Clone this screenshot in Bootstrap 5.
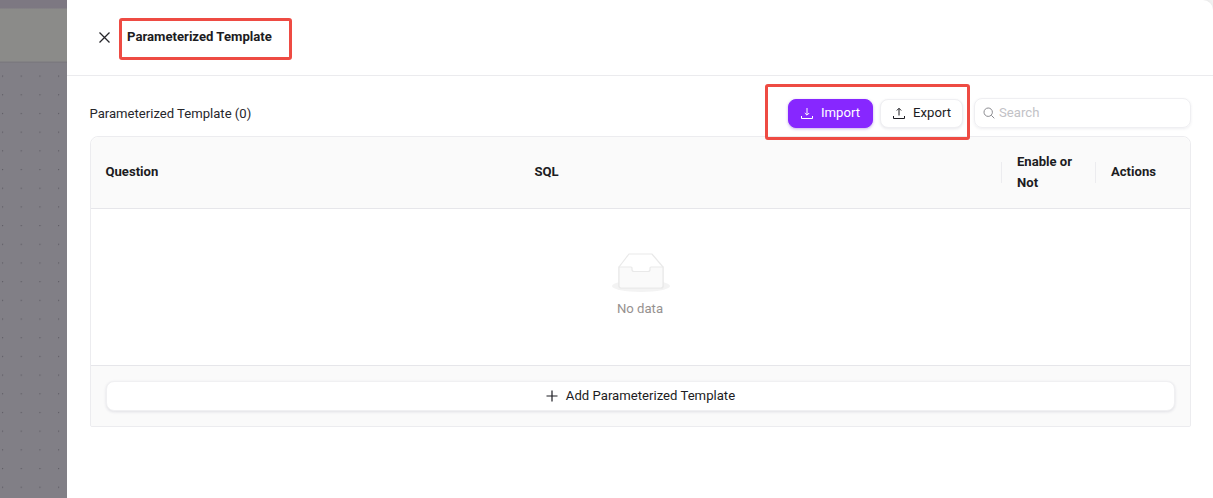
<!DOCTYPE html>
<html lang="en">
<head>
<meta charset="utf-8">
<title>Parameterized Template</title>
<link href="https://cdn.jsdelivr.net/npm/bootstrap@5.3.0/dist/css/bootstrap.min.css" rel="stylesheet">
<style>
html,body{height:498px;overflow:hidden}
body{font-family:Roboto,"Liberation Sans",sans-serif;font-size:13.15px;color:#1c1c22;background:#fff}
.stage{height:498px;background:#f3f3f3}
.backdrop{width:67px;flex:none;background-color:#817f86;background-image:radial-gradient(circle at 2.5px 2.5px,#5e5c64 .7px,transparent 1px);background-size:18.7px 18.7px;background-position:0 17.500px;position:relative}
.backdrop-top{height:63px;background:linear-gradient(#7d7882 0,#7d7882 8px,#8b8b89 9px,#8b8b89 61px,#7b797f 62px)}
.drawer{background:#fff;box-shadow:-3px 0 7px rgba(0,0,0,.14);min-width:0;border-top-right-radius:10px}
.drawer-head{height:76px;border-bottom:1px solid #ebebee;padding-left:31px}
.close-x{width:13px;height:13px;color:#26262b;margin-top:31px;flex:none}
.drawer-title{font-size:13.15px;font-weight:700;margin:29px 0 0 16px;line-height:15px;color:#1c1c22}
.mark-box{position:absolute;border:3px solid #ee4b43;border-radius:3px;pointer-events:none}
.box-title{left:119px;top:18px;width:173px;height:42px}
.box-btns{left:765px;top:84px;width:205px;height:56px}
.tool-row{padding:22px 22px 0 23px;height:60px}
.tool-label{color:#26262b;line-height:15px;margin:8px 0 0 -.5px;font-size:13.1px}
.pill-group{gap:7px;margin-top:1px}
.pill{height:29px;border-radius:8px;font-size:13.15px;line-height:15px;padding:0 11px 2px 12px;display:inline-flex;align-items:center;border:1px solid #efeff2;background:#fff;color:#1c1c22;box-shadow:0 1px 3px rgba(40,40,80,.1)}
.pill-primary{background:#8727ff;border-color:#8727ff;color:#fff;box-shadow:0 1px 3px rgba(90,20,200,.35);padding:0 12px 2px 12px}
.pill svg{width:12px;height:12px;margin-right:8px}
.search-box{width:217px;height:30px;margin-left:11px;border:1px solid #efeff2;border-radius:8px;box-shadow:0 1px 3px rgba(40,40,80,.08);color:#c2c2c6;padding:0 0 1px 8px}
.search-box svg{width:12px;height:12px;margin-right:4px;color:#8a8a8f}
.tbl-wrap{margin:0 22px 0 23px;border:1px solid #ececef;border-radius:8px 8px 2px 2px;height:291px}
.tbl-head{height:72px;background:#fafafa;border-bottom:1px solid #e6e6ea;border-radius:8px 8px 0 0;font-weight:700;font-size:13.1px;line-height:21px;color:#1c1c22;padding-bottom:1px}
.th-q{width:429px;padding-left:14.500px;margin-bottom:2px}
.th-s{width:481px;padding-left:14.500px;margin-bottom:2px}
.th-e{width:94px;padding:0 15px 0 16px;position:relative}
.th-a{flex:1;padding-left:16px;position:relative;margin-bottom:2px}
.th-e::before,.th-a::before{content:"";position:absolute;left:0;top:50%;height:21px;margin-top:-10px;border-left:1px solid #ececef}
.th-a::before{margin-top:-9px}
.tbl-empty{height:157px;border-bottom:1px solid #e6e6ea;color:#96918f;padding-right:1px}
.empty-art{width:60px;height:39px;margin:44px 0 0 1px}
.empty-txt{margin-top:9px;line-height:15px}
.tbl-foot{height:60px;background:#fafafa;padding:15px 15px 0;border-radius:0 0 2px 2px}
.add-btn{height:30px;background:#fff;border-radius:8px;border:1px solid #f0f0f2;box-shadow:0 1px 3px rgba(40,40,80,.12);color:#1c1c22}
.add-btn svg{width:12px;height:12px;margin-right:8px}
</style>
</head>
<body>
<div class="stage d-flex position-relative">
  <div class="backdrop"><div class="backdrop-top"></div></div>
  <div class="drawer flex-grow-1">
    <div class="drawer-head d-flex">
      <svg class="close-x" viewBox="0 0 13 13" fill="none" stroke="currentColor" stroke-width="1.3"><path d="M1.500 1.500l10 10M11.500 1.500l-10 10"/></svg>
      <div class="drawer-title">Parameterized Template</div>
    </div>
    <div class="tool-row d-flex align-items-start">
      <div class="tool-label flex-grow-1">Parameterized Template (0)</div>
      <div class="d-flex pill-group">
        <button class="pill pill-primary" type="button"><svg viewBox="0 0 12 12" fill="none" stroke="currentColor" stroke-width="1"><path d="M6 1v7M3.800 6L6 8.200 8.200 6M.5 9v2.500h11V9"/></svg>Import</button>
        <button class="pill" type="button"><svg viewBox="0 0 12 12" fill="none" stroke="currentColor" stroke-width="1"><path d="M6 8.500V1.500M3.800 3.500L6 1.300 8.200 3.500M.5 9v2.500h11V9"/></svg>Export</button>
      </div>
      <div class="search-box d-flex align-items-center"><svg viewBox="0 0 12 12" fill="none" stroke="currentColor" stroke-width="1"><circle cx="5.200" cy="5.200" r="4.200"/><path d="M8.300 8.300l3 3"/></svg>Search</div>
    </div>
    <div class="tbl-wrap">
      <div class="tbl-head d-flex align-items-center">
        <div class="th-q">Question</div>
        <div class="th-s">SQL</div>
        <div class="th-e">Enable or Not</div>
        <div class="th-a">Actions</div>
      </div>
      <div class="tbl-empty d-flex flex-column align-items-center">
        <svg class="empty-art" viewBox="0 0 60 39" fill="none"><ellipse cx="30" cy="33" rx="29" ry="6" fill="#f3f3f3"/><path d="M8 14L18 1h23l11 13v19a2 2 0 0 1-2 2H10a2 2 0 0 1-2-2z" fill="#fff" stroke="#e9e9e9" stroke-width="1.200"/><path d="M8 14h12a1 1 0 0 1 1 1v1.500a2 2 0 0 0 2 2h14a2 2 0 0 0 2-2V15a1 1 0 0 1 1-1h12v19a2 2 0 0 1-2 2H10a2 2 0 0 1-2-2z" fill="#fafafa" stroke="#e9e9e9" stroke-width="1.200"/></svg>
        <div class="empty-txt">No data</div>
      </div>
      <div class="tbl-foot">
        <div class="add-btn d-flex align-items-center justify-content-center"><svg viewBox="0 0 12 12" fill="none" stroke="currentColor" stroke-width="1.200"><path d="M6 .5v11M.5 6h11"/></svg>Add Parameterized Template</div>
      </div>
    </div>
  </div>
  <div class="mark-box box-title"></div>
  <div class="mark-box box-btns"></div>
</div>
<script src="https://cdn.jsdelivr.net/npm/bootstrap@5.3.0/dist/js/bootstrap.bundle.min.js"></script>
</body>
</html>
